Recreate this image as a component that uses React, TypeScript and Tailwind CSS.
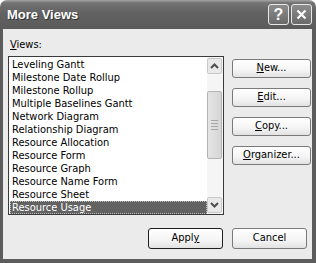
import React from 'react';

const FONT = { fontFamily: '"DejaVu Sans Condensed", "Liberation Sans", Arial, sans-serif' };
const TITLE_FONT = { fontFamily: '"Liberation Sans", Arial, sans-serif' };

const VIEWS = [
  'Leveling Gantt',
  'Milestone Date Rollup',
  'Milestone Rollup',
  'Multiple Baselines Gantt',
  'Network Diagram',
  'Relationship Diagram',
  'Resource Allocation',
  'Resource Form',
  'Resource Graph',
  'Resource Name Form',
  'Resource Sheet',
  'Resource Usage',
];

const XpButton: React.FC<{ children: React.ReactNode; isDefault?: boolean; className?: string }> = ({
  children,
  isDefault,
  className = '',
}) => (
  <button
    className={`flex items-center justify-center rounded-[3px] border text-[11px] text-black bg-[linear-gradient(to_bottom,#ffffff_0%,#f4f4f4_60%,#e2e2e2_100%)] ${
      isDefault ? 'border-[#1e1e1e]' : 'border-[#7a7a7a]'
    } ${className}`}
    style={FONT}
  >
    {children}
  </button>
);

const Arrow: React.FC<{ up?: boolean }> = ({ up }) => (
  <svg width="9" height="6" viewBox="0 0 9 6">
    <path
      d={up ? 'M1 5 L4.5 1.5 L8 5' : 'M1 1 L4.5 4.5 L8 1'}
      stroke="#4d4d4d"
      strokeWidth="2"
      fill="none"
    />
  </svg>
);

export default function App() {
  return (
    <div className="w-[316px] h-[263px] flex flex-col bg-white" style={FONT}>
      {/* Title bar */}
      <div className="h-[29px] shrink-0 rounded-t-[7px] flex items-center pl-[7px] pr-[4px] bg-[linear-gradient(to_bottom,#a4a4a4_0%,#737373_10%,#626262_45%,#5a5a5a_100%)]">
        <span className="flex-1 text-white font-bold text-[13px] [text-shadow:1px_1px_0_#333]" style={TITLE_FONT}>
          More Views
        </span>
        <div className="flex gap-[2px]">
          <div className="w-[21px] h-[21px] rounded-[3px] border border-[#e8e8e8] bg-[linear-gradient(to_bottom,#8c8c8c,#6a6a6a)] flex items-center justify-center text-white font-bold text-[16px] leading-none" style={TITLE_FONT}>
            ?
          </div>
          <div className="w-[21px] h-[21px] rounded-[3px] border border-[#e8e8e8] bg-[linear-gradient(to_bottom,#8c8c8c,#6a6a6a)] flex items-center justify-center">
            <svg width="11" height="11" viewBox="0 0 11 11">
              <path d="M1.5 1.5 L9.5 9.5 M9.5 1.5 L1.5 9.5" stroke="#fff" strokeWidth="2.2" />
            </svg>
          </div>
        </div>
      </div>

      {/* Body */}
      <div className="flex-1 flex flex-col bg-[#ebebeb] border-l-[3px] border-r-[4px] border-b-[4px] border-[#5c5c5c] pl-[5px] pt-[9px]">
        <div className="flex gap-[8px]">
          <div className="w-[216px] flex flex-col">
            <div className="text-[11px] leading-[14px] pl-[2px] text-black mb-[4px]">
              <span className="underline">V</span>iews:
            </div>
            <div className="h-[159px] border border-[#3a3a3a] bg-white flex">
              <div className="flex-1 flex flex-col pt-[1px] pl-[1px]">
                {VIEWS.map((v) => (
                  <div
                    key={v}
                    className={`h-[13px] text-[11px] leading-[13px] pl-[2px] whitespace-nowrap ${
                      v === 'Resource Usage'
                        ? 'bg-[#626262] text-white outline-1 outline-dotted outline-[#bbbbbb] -outline-offset-1'
                        : 'text-black'
                    }`}
                  >
                    {v}
                  </div>
                ))}
              </div>
              {/* Scrollbar */}
              <div className="w-[16px] flex flex-col bg-[#f5f5f5] py-[1px] pr-[1px]">
                <div className="h-[16px] rounded-[2px] border border-[#c9c9c9] bg-[#e9e9e9] flex items-center justify-center">
                  <Arrow up />
                </div>
                <div className="h-[17px]" />
                <div className="h-[68px] rounded-[2px] border border-[#b4b4b4] bg-[linear-gradient(to_right,#e4e4e4,#d6d6d6)] flex flex-col items-center justify-center gap-[2px]">
                  <div className="w-[7px] h-[1px] bg-[#a8a8a8]" />
                  <div className="w-[7px] h-[1px] bg-[#a8a8a8]" />
                  <div className="w-[7px] h-[1px] bg-[#a8a8a8]" />
                  <div className="w-[7px] h-[1px] bg-[#a8a8a8]" />
                </div>
                <div className="flex-1" />
                <div className="h-[16px] rounded-[2px] border border-[#c9c9c9] bg-[#e9e9e9] flex items-center justify-center">
                  <Arrow />
                </div>
              </div>
            </div>
          </div>

          <div className="flex flex-col gap-[10px] pt-[21px]">
            <XpButton className="w-[79px] h-[19px]">
              <span className="underline">N</span>ew...
            </XpButton>
            <XpButton className="w-[79px] h-[19px]">
              <span className="underline">E</span>dit...
            </XpButton>
            <XpButton className="w-[79px] h-[19px]">
              <span className="underline">C</span>opy...
            </XpButton>
            <XpButton className="w-[79px] h-[19px]">
              <span className="underline">O</span>rganizer...
            </XpButton>
          </div>
        </div>

        <div className="flex gap-[9px] pl-[140px] mt-[13px]">
          <XpButton isDefault className="w-[75px] h-[21px]">
            Appl<span className="underline">y</span>
          </XpButton>
          <XpButton className="w-[75px] h-[21px]">Cancel</XpButton>
        </div>
      </div>
    </div>
  );
}
